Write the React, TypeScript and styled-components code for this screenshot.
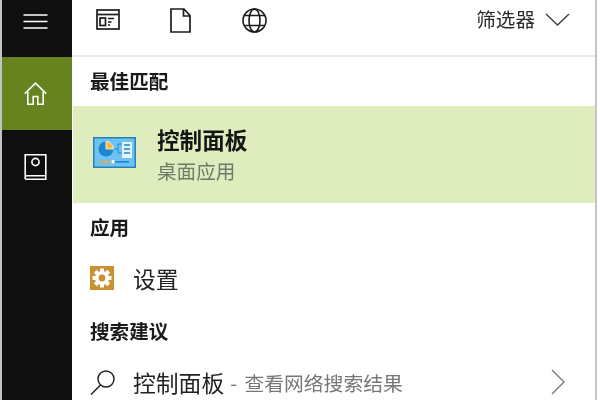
import React from "react";
import styled, { createGlobalStyle } from "styled-components";

const Global = createGlobalStyle`
  html, body { margin: 0; padding: 0; background: #fff; overflow: hidden; }
  #root { width: 600px; height: 400px; overflow: hidden; }
`;

const Frame = styled.div`
  width: 600px;
  height: 400px;
  display: flex;
  background: #fff;
  overflow: hidden;
  font-family: "Noto Sans CJK SC", "Liberation Sans", sans-serif;
  color: #1a1a1a;
  filter: blur(0.35px);
`;

const Edge = styled.div`
  width: 2px;
  flex: none;
  background: #c4c4c4;
`;

const Sidebar = styled.nav`
  width: 70px;
  flex: none;
  background: #0f0f0f;
  display: flex;
  flex-direction: column;
`;

const SideItem = styled.div<{ $h: number; $active?: boolean; $lift?: number }>`
  height: ${(p) => p.$h}px;
  flex: none;
  box-sizing: border-box;
  padding-right: 3px;
  padding-bottom: ${(p) => p.$lift ?? 0}px;
  display: flex;
  align-items: center;
  justify-content: center;
  background: ${(p) => (p.$active ? "#66831f" : "transparent")};
  color: #fff;
`;

const Main = styled.main`
  width: 523px;
  flex: none;
  display: flex;
  flex-direction: column;
  height: 440px;
`;

const TopBar = styled.header`
  flex: none;
  box-sizing: border-box;
  border-bottom: 2px solid #e8e8e8;
  height: 57px;
  display: flex;
  align-items: flex-start;
  padding: 8px 0 0 24px;
`;

const TopIcon = styled.div<{ $w: number; $top?: number }>`
  width: ${(p) => p.$w}px;
  flex: none;
  display: flex;
  padding-top: ${(p) => p.$top ?? 0}px;
  color: #1c1c1c;
`;

const Filter = styled.div`
  margin-left: auto;
  display: flex;
  align-items: center;
  gap: 10px;
  padding: 0 25px 0 0;
  font-size: 19.6px;
  line-height: 24px;
  height: 24px;
  margin-top: -1px;
  color: #2a2a2a;
`;

const SectionLabel = styled.div<{ $h: number; $lift: number }>`
  height: ${(p) => p.$h}px;
  flex: none;
  box-sizing: border-box;
  padding-bottom: ${(p) => p.$lift}px;
  display: flex;
  align-items: center;
  padding-left: 18px;
  font-size: 19.6px;
  font-weight: 700;
  color: #1a1a1a;
`;

const Highlight = styled.div`
  height: 97px;
  flex: none;
  box-sizing: border-box;
  margin-left: 1px;
  background: #dfedbe;
  display: flex;
  align-items: center;
  padding: 0 0 5px 20px;
  gap: 21px;
`;

const HighlightText = styled.div`
  display: flex;
  flex-direction: column;
  margin-top: 6px;
`;

const Title = styled.div`
  font-size: 22.6px;
  font-weight: 700;
  line-height: 31px;
  color: #151515;
`;

const Subtitle = styled.div`
  font-size: 19.6px;
  line-height: 32px;
  color: #6f7a68;
`;

const Row = styled.div<{ $h: number }>`
  height: ${(p) => p.$h}px;
  flex: none;
  box-sizing: border-box;
  display: flex;
  align-items: center;
  padding: 0 30px 2px 18px;
`;

const RowIconSlot = styled.div`
  width: 43px;
  flex: none;
  display: flex;
`;

const RowText = styled.span`
  font-size: 22.8px;
  color: #222;
`;

const RowHint = styled.span`
  font-size: 19.8px;
  word-spacing: 3px;
  color: #777;
  margin-left: 6px;
`;

const Chevron = styled.div`
  margin-left: auto;
  display: flex;
  color: #777;
`;

const Menu = () => (
  <svg width="25" height="15" viewBox="0 0 25 15" fill="none" stroke="#fff" strokeWidth="1.6">
    <path d="M0.5 1h24M0.5 7.5h24M0.5 14h24" />
  </svg>
);

const Home = () => (
  <svg width="23" height="23" viewBox="0 0 23 23" fill="none" stroke="#fff" strokeWidth="1.6">
    <path d="M0.7 11.8 11.5 1.2l10.8 10.6M3.8 9.5v12.7h5.4v-7.7h4.6v7.7h5.4V9.5" />
  </svg>
);

const Notebook = () => (
  <svg width="23" height="26" viewBox="0 0 23 26" fill="none" stroke="#fff" strokeWidth="1.6">
    <path d="M1.2 22.5V0.8h20.6v24.4H3a1.6 1.6 0 0 1-1.8-2.2 1.6 1.6 0 0 1 1.8-1.2h18.8" />
    <circle cx="11.5" cy="8" r="3.6" />
  </svg>
);

const Panel = () => (
  <svg width="43" height="31" viewBox="0 0 43 31">
    <rect x="0" y="0" width="43" height="31" fill="#2a7fb8" />
    <rect x="1.5" y="1.5" width="40" height="28" fill="#6cc3f2" />
    <circle cx="13" cy="12" r="7.5" fill="#1e86cf" />
    <path d="M13 12V4.5a7.5 7.5 0 0 1 7.5 7.5z" fill="#f5b942" stroke="#fff" strokeWidth="0.8" />
    <path d="M21 12h4V7h4M25 12v4h4" fill="none" stroke="#1e86cf" strokeWidth="0.9" />
    <rect x="29" y="5" width="10" height="16" fill="#e4f3fb" />
    <path d="M31 8h6M31 12h6M31 16h6" stroke="#1e86cf" strokeWidth="1.6" />
    <rect x="6" y="24" width="12" height="1.6" fill="#f0a93a" />
    <rect x="18" y="24" width="18" height="1.6" fill="#1e86cf" />
    <circle cx="20" cy="24.8" r="1.8" fill="#fff" />
  </svg>
);

const Gear = () => (
  <svg width="24" height="24" viewBox="0 0 24 24">
    <rect width="24" height="24" fill="#ca9131" />
    <g fill="#fff">
      <circle cx="12" cy="12" r="7" />
      <path d="M10 2.5h4v4h-4zM10 17.5h4v4h-4zM2.5 10h4v4h-4zM17.5 10h4v4h-4z" />
      <path d="M10 2.5h4v4h-4zM10 17.5h4v4h-4zM2.5 10h4v4h-4zM17.5 10h4v4h-4z" transform="rotate(45 12 12)" />
    </g>
    <circle cx="12" cy="12" r="3.4" fill="#ca9131" />
  </svg>
);

const Search = () => (
  <svg width="25" height="25" viewBox="0 0 25 25" fill="none" stroke="#222" strokeWidth="1.5">
    <circle cx="16" cy="9" r="8" />
    <path d="M10.5 15 1 24.5" />
  </svg>
);

const Chev = () => (
  <svg width="14" height="26" viewBox="0 0 14 26" fill="none" stroke="#777" strokeWidth="1.4">
    <path d="M1 1 13 13 1 25" />
  </svg>
);

const Down = () => (
  <svg width="25" height="13" viewBox="0 0 25 13" fill="none" stroke="#444" strokeWidth="1.5">
    <path d="M1 1 12.5 12 24 1" />
  </svg>
);

const AppsIcon = () => (
  <svg width="24" height="21" viewBox="0 0 24 21" fill="none" stroke="#1c1c1c" strokeWidth="1.7">
    <rect x="1" y="1" width="22" height="19" />
    <path d="M1 5.5h22" />
    <rect x="4" y="9" width="5.5" height="7.5" />
    <path d="M12 9.5h6M12 13h3.5M12 16h2" />
  </svg>
);

const FileIcon = () => (
  <svg width="21" height="25" viewBox="0 0 21 25" fill="none" stroke="#1c1c1c" strokeWidth="1.7">
    <path d="M1 1h13l6 6.5V24H1zM13.5 1v7H20" />
  </svg>
);

const GlobeIcon = () => (
  <svg width="25" height="25" viewBox="0 0 25 25" fill="none" stroke="#1c1c1c" strokeWidth="1.6">
    <circle cx="12.5" cy="12.5" r="11.5" />
    <ellipse cx="12.5" cy="12.5" rx="5.5" ry="11.5" />
    <path d="M2.5 7.5h20M2.5 17.5h20" />
  </svg>
);

export default function App() {
  return (
    <Frame>
      <Global />
      <Edge />
      <Sidebar>
        <SideItem $h={57} $lift={15}><Menu /></SideItem>
        <SideItem $h={73} $active><Home /></SideItem>
        <SideItem $h={73}><Notebook /></SideItem>
      </Sidebar>
      <Main>
        <TopBar>
          <TopIcon $w={74} $top={1}><AppsIcon /></TopIcon>
          <TopIcon $w={72}><FileIcon /></TopIcon>
          <TopIcon $w={30}><GlobeIcon /></TopIcon>
          <Filter>
            筛选器
            <Down />
          </Filter>
        </TopBar>
        <SectionLabel $h={49} $lift={2}>最佳匹配</SectionLabel>
        <Highlight>
          <Panel />
          <HighlightText>
            <Title>控制面板</Title>
            <Subtitle>桌面应用</Subtitle>
          </HighlightText>
        </Highlight>
        <SectionLabel $h={50} $lift={3}>应用</SectionLabel>
        <Row $h={52}>
          <RowIconSlot><Gear /></RowIconSlot>
          <RowText>设置</RowText>
        </Row>
        <SectionLabel $h={52} $lift={2}>搜索建议</SectionLabel>
        <Row $h={52}>
          <RowIconSlot><Search /></RowIconSlot>
          <RowText>控制面板</RowText>
          <RowHint>- 查看网络搜索结果</RowHint>
          <Chevron><Chev /></Chevron>
        </Row>
      </Main>
      <Edge />
    </Frame>
  );
}
